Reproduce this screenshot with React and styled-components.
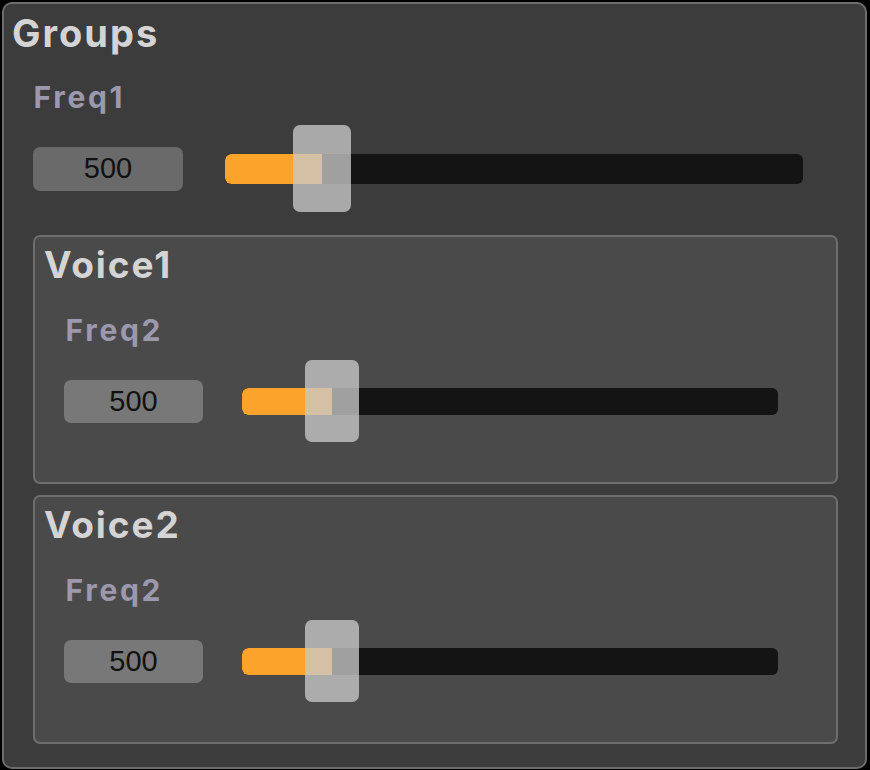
import React from "react";
import styled, { createGlobalStyle } from "styled-components";

const Global = createGlobalStyle`
  html, body {
    margin: 0;
    padding: 0;
    background: #000;
  }
  body {
    font-family: "Liberation Sans", Arial, sans-serif;
  }
  #root {
    padding: 2px 0 0 2px;
  }
`;

const Panel = styled.div`
  box-sizing: border-box;
  width: 865px;
  background: #3c3c3c;
  border: 2px solid #6c6c6c;
  border-radius: 10px;
  padding: 9.5px 27px 23px 8px;
  display: flex;
  flex-direction: column;
`;

const Heading = styled.div`
  font-family: Inter, "Liberation Sans", sans-serif;
  font-weight: 700;
  font-size: ${(p) => p.$size}px;
  line-height: 38px;
  height: 38px;
  letter-spacing: ${(p) => p.$spacing}px;
  color: #d4d4d4;
  white-space: nowrap;
`;

const Body = styled.div`
  display: flex;
  flex-direction: column;
  margin-left: ${(p) => p.$indent}px;
`;

const Label = styled.div`
  font-family: Inter, "Liberation Sans", sans-serif;
  font-weight: 700;
  font-size: 30px;
  line-height: 30px;
  height: 30px;
  letter-spacing: 2.7px;
  color: #9c99ae;
  margin-top: ${(p) => p.$top}px;
  padding-left: ${(p) => p.$left}px;
  white-space: nowrap;
`;

const Row = styled.div`
  display: flex;
  align-items: center;
  gap: ${(p) => p.$gap}px;
  margin-top: ${(p) => p.$top}px;
  height: ${(p) => p.$h}px;
`;

const NumberBox = styled.div`
  box-sizing: border-box;
  width: ${(p) => p.$w}px;
  height: ${(p) => p.$h}px;
  border-radius: 7px;
  background: ${(p) => p.$bg};
  color: #111;
  font-size: 29px;
  display: flex;
  align-items: center;
  justify-content: center;
  flex-shrink: 0;
`;

const SliderWrap = styled.div`
  position: relative;
  width: ${(p) => p.$w}px;
  height: ${(p) => p.$h}px;
  flex-shrink: 0;
  display: flex;
  align-items: center;
`;

const Track = styled.div`
  position: relative;
  width: 100%;
  height: ${(p) => p.$h}px;
  background: #141414;
  border-radius: 6px;
  overflow: hidden;
`;

const Fill = styled.div`
  height: 100%;
  background: #fba32a;
  border-radius: 6px 0 0 6px;
`;

const Thumb = styled.div`
  position: absolute;
  top: 0;
  width: ${(p) => p.$w}px;
  height: 100%;
  border-radius: 7px;
  background: rgba(200, 200, 200, 0.78);
`;

const Group = styled.div`
  box-sizing: border-box;
  height: 249px;
  border: 2px solid #6e6e6e;
  border-radius: 7px;
  background: #4a4a4a;
  padding: 9px 0 0 9px;
  margin-top: ${(p) => p.$top}px;
  display: flex;
  flex-direction: column;
`;

function Slider({ width, height, trackH, thumbW, fraction }) {
  const thumbLeft = fraction * (width - thumbW);
  return (
    <SliderWrap $w={width} $h={height}>
      <Track $h={trackH}>
        <Fill style={{ width: thumbLeft + thumbW / 2 }} />
      </Track>
      <Thumb $w={thumbW} style={{ left: thumbLeft }} />
    </SliderWrap>
  );
}

function Control({ label, inner }) {
  const s = inner
    ? { labelTop: 30.6, rowTop: 15.4, rowH: 82, boxW: 139, boxH: 43, boxBg: "#787878", gap: 39, sw: 536, tr: 27, tw: 54, lLeft: 1.5 }
    : { labelTop: 30.8, rowTop: 13, rowH: 87, boxW: 150, boxH: 44, boxBg: "#6a6a6a", gap: 42, sw: 578, tr: 30, tw: 58, lLeft: 0.5 };
  return (
    <>
      <Label $top={s.labelTop} $left={s.lLeft}>{label}</Label>
      <Row $top={s.rowTop} $h={s.rowH} $gap={s.gap}>
        <NumberBox $w={s.boxW} $h={s.boxH} $bg={s.boxBg}>500</NumberBox>
        <Slider width={s.sw} height={s.rowH} trackH={s.tr} thumbW={s.tw} fraction={0.13} />
      </Row>
    </>
  );
}

function Voice({ name, top }) {
  return (
    <Group $top={top}>
      <Heading $size={37} $spacing={1.9}>{name}</Heading>
      <Body $indent={20}>
        <Control label="Freq2" inner />
      </Body>
    </Group>
  );
}

export default function App() {
  return (
    <>
      <Global />
      <Panel>
        <Heading $size={38} $spacing={2}>Groups</Heading>
        <Body $indent={21}>
          <Control label="Freq1" />
          <Voice name="Voice1" top={23} />
          <Voice name="Voice2" top={11} />
        </Body>
      </Panel>
    </>
  );
}
